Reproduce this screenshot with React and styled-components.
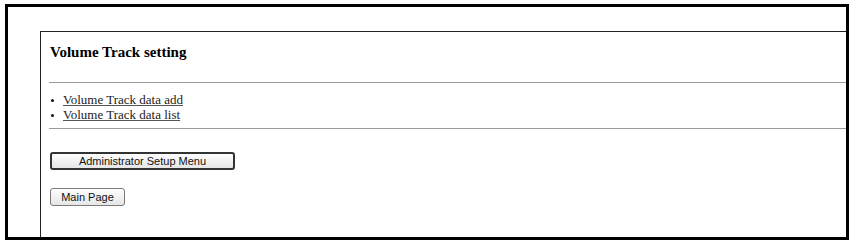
import React from 'react';
import styled, { createGlobalStyle } from 'styled-components';

const GlobalStyle = createGlobalStyle`
    html, body {
        margin: 0;
        padding: 0;
        background: #fff;
    }
`;

const Frame = styled.div`
    box-sizing: border-box;
    margin: 4px 0 0 5px;
    width: 844px;
    height: 236px;
    border: 3px solid #000;
    padding: 24px 0 0 32px;
    display: flex;
`;

const Panel = styled.div`
    flex: 1;
    border-top: 1px solid #222;
    border-left: 1px solid #222;
    padding-left: 8px;
    display: flex;
    flex-direction: column;
`;

const Heading = styled.h1`
    margin: 12px 0 0 1px;
    font-family: "Liberation Serif", "Times New Roman", serif;
    font-size: 15px;
    line-height: 17px;
    font-weight: bold;
    color: #000;
`;

const Rule = styled.div`
    height: 0;
    border-top: 1px solid #9a9a9a;
    margin-top: ${(p) => p.$top}px;
`;

const List = styled.ul`
    list-style: none;
    margin: 9px 0 6px;
    padding: 0;
`;

const Item = styled.li`
    display: flex;
    align-items: center;
    height: 15px;
    font-family: "Liberation Serif", "Times New Roman", serif;
    font-size: 13px;
    line-height: 15px;

    &::before {
        content: '';
        width: 3px;
        height: 3px;
        border-radius: 50%;
        background: #111;
        margin: 1px 9px 0 2px;
    }
`;

const ItemLink = styled.a`
    color: #222;
    text-decoration: underline;
    text-decoration-color: #555;
`;

const Buttons = styled.div`
    display: flex;
    flex-direction: column;
    align-items: flex-start;
    gap: 18px;
    margin: 23px 0 0 1px;
`;

const Button = styled.button`
    box-sizing: border-box;
    width: ${(p) => p.$width}px;
    height: 18px;
    padding: 0;
    border: ${(p) => (p.$primary ? '2px solid #333' : '1px solid #7a7a7a')};
    border-radius: 3px;
    background: linear-gradient(#fdfdfd, #e6e6e6);
    font-family: "Liberation Sans", Arial, sans-serif;
    font-size: 11px;
    color: #111;
    cursor: pointer;
`;

const App = () => (
    <>
        <GlobalStyle />
        <Frame>
            <Panel>
                <Heading>Volume Track setting</Heading>
                <Rule $top={21} />
                <List>
                    <Item><ItemLink href="#">Volume Track data add</ItemLink></Item>
                    <Item><ItemLink href="#">Volume Track data list</ItemLink></Item>
                </List>
                <Rule $top={0} />
                <Buttons>
                    <Button $primary $width={185}>Administrator Setup Menu</Button>
                    <Button $width={75}>Main Page</Button>
                </Buttons>
            </Panel>
        </Frame>
    </>
);

export default App;
